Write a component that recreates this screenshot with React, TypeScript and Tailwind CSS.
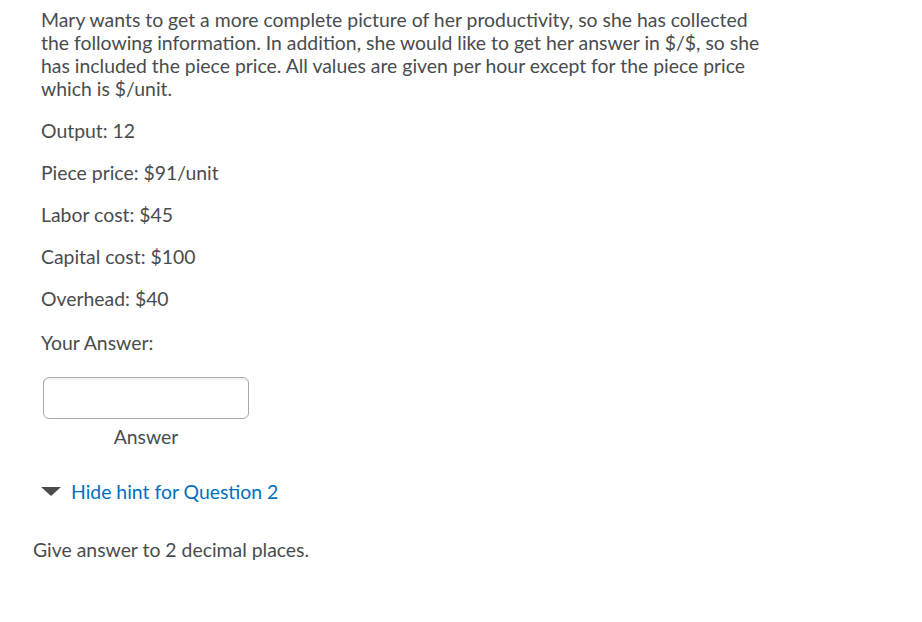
export default function App() {
  const items = [
    'Output: 12',
    'Piece price: $91/unit',
    'Labor cost: $45',
    'Capital cost: $100',
    'Overhead: $40',
  ]

  return (
    <div className="min-h-[622px] w-[922px] bg-white font-['Lato','Liberation_Sans',sans-serif] text-[19.4px] leading-[23px] text-[#494c4e]">
      <div className="pl-[41px] pt-[8px]">
        <p>
          Mary wants to get a more complete picture of her productivity, so she has collected
          <br />
          the following information. In addition, she would like to get her answer in $/$, so she
          <br />
          has included the piece price. All values are given per hour except for the piece price
          <br />
          which is $/unit.
        </p>

        {items.map((item) => (
          <p key={item} className="mt-[19px]">
            {item}
          </p>
        ))}

        <p className="mt-[21px]">Your Answer:</p>

        <div className="mt-[23px] flex w-[208px] flex-col items-center pl-[2px]">
          <input
            type="text"
            aria-label="Answer"
            className="h-[42px] w-[206px] rounded-[6px] border border-[#a4a9ad] bg-white shadow-[inset_0_2px_0_0_#f2f3f5] outline-none"
          />
          <span className="mt-[6px]">Answer</span>
        </div>

        <div className="mt-[32px] flex items-center gap-[10px]">
          <svg width="20" height="9" viewBox="0 0 20 9" aria-hidden="true">
            <polygon points="0,0 20,0 10,9" fill="#494c4e" />
          </svg>
          <a href="#" className="text-[#006fbf]">
            Hide hint for Question 2
          </a>
        </div>
      </div>

      <p className="mt-[35px] pl-[33px]">Give answer to 2 decimal places.</p>
    </div>
  )
}
